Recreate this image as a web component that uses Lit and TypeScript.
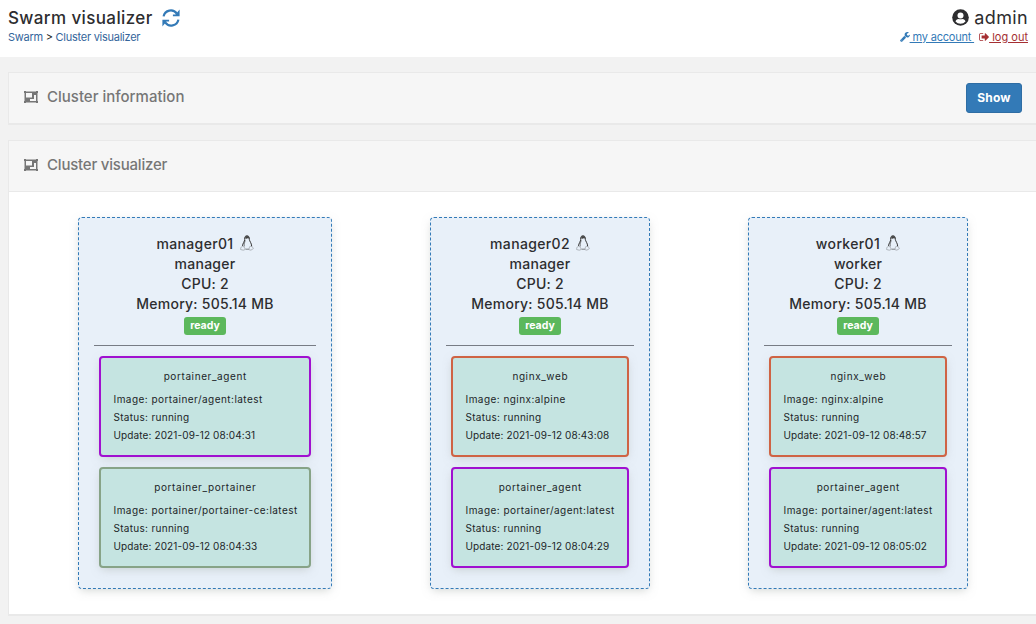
import { LitElement, html, css } from "lit";
import { customElement, property } from "lit/decorators.js";

interface Task {
  name: string;
  image: string;
  update: string;
  tone: string;
}
interface SwarmNode {
  host: string;
  role: string;
  tasks: Task[];
}

const agent = (update: string): Task => ({ name: "portainer_agent", image: "portainer/agent:latest", update, tone: "purple" });
const nginx = (update: string): Task => ({ name: "nginx_web", image: "nginx:alpine", update, tone: "orange" });

const NODES: SwarmNode[] = [
  {
    host: "manager01",
    role: "manager",
    tasks: [
      agent("2021-09-12 08:04:31"),
      { name: "portainer_portainer", image: "portainer/portainer-ce:latest", update: "2021-09-12 08:04:33", tone: "green" },
    ],
  },
  { host: "manager02", role: "manager", tasks: [nginx("2021-09-12 08:43:08"), agent("2021-09-12 08:04:29")] },
  { host: "worker01", role: "worker", tasks: [nginx("2021-09-12 08:48:57"), agent("2021-09-12 08:05:02")] },
];

const refreshIcon = html`<svg class="refresh" viewBox="0 0 18 18">
  <path d="M1.600 7.400A7.300 7.300 0 0 1 14.800 4.600M16.400 10.600A7.300 7.300 0 0 1 3.200 13.400" fill="none" stroke="currentColor" stroke-width="2.200" />
  <path d="M17.600 .5V7.200H10.900V5.600H13.500zM.4 17.500V10.800H7.100V12.400H4.500z" fill="currentColor" />
</svg>`;

const userIcon = html`<svg class="user" viewBox="0 0 17 17">
  <circle cx="8.500" cy="8.500" r="8.300" fill="#2d2d2f" />
  <circle cx="8.500" cy="6.400" r="3" fill="#fff" />
  <path d="M3.500 12.400c.4-1.600 1.500-2.500 3-2.500.7.3 1.300.4 2 .4s1.300-.1 2-.4c1.500 0 2.600.9 3 2.500a6.300 6.300 0 0 1-10 0z" fill="#fff" />
</svg>`;

const wrenchIcon = html`<svg class="mini" viewBox="64 128 1664 1664">
  <path
    fill="currentColor"
    d="M448 1472q0-26-19-45t-45-19-45 19-19 45 19 45 45 19 45-19 19-45zm644-420l-682 682q-37 37-90 37-52 0-91-37l-106-108q-38-36-38-90 0-53 38-91l681-681q39 98 114.500 173.500t173.500 114.500zm634-435q0 39-23 106-47 134-164.500 217.500t-258.500 83.500q-185 0-316.500-131.500t-131.500-316.500 131.500-316.500 316.500-131.500q58 0 121.500 16.500t107.500 46.500q16 11 16 28t-16 28l-293 169v224l193 107q5-3 79-48.500t135.500-81 70.500-35.500q15 0 23.500 10t8.500 25z"
  />
</svg>`;

const signOutIcon = html`<svg class="mini" viewBox="32 100 1600 1600">
  <path
    fill="currentColor"
    d="M704 1440q0 4 1 20t.5 26.500-3 23.500-10 19.500-20.500 6.500h-320q-119 0-203.500-84.500t-84.500-203.500v-704q0-119 84.500-203.500t203.500-84.500h320q13 0 22.500 9.500t9.500 22.500q0 4 1 20t.5 26.500-3 23.500-10 19.500-20.500 6.500h-320q-66 0-113 47t-47 113v704q0 66 47 113t113 47h312l11.500 1 11.500 3 8 5.500 7 9 2 13.500zm928-544q0 26-19 45l-544 544q-19 19-45 19t-45-19-19-45v-288h-448q-26 0-45-19t-19-45v-384q0-26 19-45t45-19h448v-288q0-26 19-45t45-19 45 19l544 544q19 19 19 45z"
  />
</svg>`;

const groupIcon = html`<svg class="group" viewBox="0 0 14 12">
  <path
    fill="currentColor"
    fill-rule="evenodd"
    d="M0 0H2V.5H12V0H14V2H13.500V10H14V12H12V11.500H2V12H0V10H.5V2H0zM2 2V6.500H8V2zM10 4V8H6V10H12V4z"
  />
</svg>`;

const tuxIcon = html`<svg class="tux" viewBox="0 0 14 16">
  <g fill="none" stroke="#333">
    <path d="M4.700 4.500C4.500 2 5.200.8 7 .8s2.500 1.400 2.300 3.500c.2 2 2.300 3.800 2.400 7" stroke-width="1" />
    <path d="M4.700 4.500C4.700 6.400 2.700 8.200 2.500 11" stroke-width="1" />
    <path d="M5.300 5.300C4.600 7.300 4 9 4.300 11.500M5.500 14.200h3.500" stroke-width=".6" />
    <path
      d="M2.300 11.200C3.500 11 4.500 12.500 5.200 14c-.3 1.600-2.500 1.200-4.600.5 0-1.200.2-2.500 1.700-3.300zM11.800 11.300c.4 1 1.300 1.300 1.600 2.200-1.400 1.200-3.400 2.500-4.300 1 .2-1.500.4-3.200 1-3.200s1 .6 1.700 0z"
      stroke="#8a8d92"
      stroke-width=".6"
    />
  </g>
  <path d="M5.200 1.600C6 .7 8.100.7 8.900 1.800l.1 1.700-1.200-.3-1.300.5-1.300-.2z" fill="#444" />
</svg>`;

@customElement("swarm-node")
export class SwarmNodeCard extends LitElement {
  @property({ attribute: false }) node!: SwarmNode;

  static styles = css`
    :host {
      display: block;
      box-sizing: border-box;
      height: 372px;
      padding: 15px;
      border: 1px dashed #337ab7;
      border-radius: 4px;
      background: #e8f0f9;
      box-shadow: 0 3px 10px -2px rgba(161, 170, 166, 0.5);
    }
    .info {
      display: flex;
      flex-direction: column;
      align-items: center;
      padding-top: 1px;
      font-size: 14px;
      font-weight: 500;
      line-height: 20px;
      letter-spacing: 0.25px;
      color: #2d2d2f;
    }
    .host {
      display: flex;
      gap: 6px;
      height: 20px;
      letter-spacing: 0.35px;
    }
    .tux {
      width: 14px;
      height: 16px;
      margin-top: 1px;
    }
    .label {
      box-sizing: border-box;
      width: 42px;
      height: 18px;
      margin-top: 3px;
      border-radius: 3px;
      background: #5cb85c;
      color: #fff;
      text-align: center;
      font-size: 10.5px;
      font-weight: 700;
      line-height: 17px;
      letter-spacing: 0;
    }
    .tasks {
      display: flex;
      flex-direction: column;
      gap: 10px;
      margin-top: 10px;
      padding: 10px 5px 0;
      border-top: 1px solid #777c85;
    }
    .task {
      box-sizing: border-box;
      height: 101px;
      padding: 9px 12px;
      border: 2px solid;
      border-radius: 4px;
      background: #c5e4e1;
      box-shadow: 0 3px 10px -2px rgba(161, 170, 166, 0.5);
      font-size: 10px;
      line-height: 18px;
      letter-spacing: 0.3px;
      white-space: nowrap;
    }
    .task div {
      padding-left: 0.5px;
      color: #1c2528;
    }
    .task .name {
      text-align: center;
      margin-bottom: 5px;
      letter-spacing: 0.6px;
    }
    .task .image {
      letter-spacing: 0.45px;
    }
    .task .update {
      letter-spacing: 0.12px;
    }
    .purple {
      border-color: #a010d0;
    }
    .green {
      border-color: #87a387;
    }
    .orange {
      border-color: #cf6344;
    }
  `;

  render() {
    const n = this.node;
    return html`
      <div class="info">
        <div class="host"><span>${n.host}</span>${tuxIcon}</div>
        <div>${n.role}</div>
        <div>CPU: 2</div>
        <div>Memory: 505.14 MB</div>
        <div class="label">ready</div>
      </div>
      <div class="tasks">
        ${n.tasks.map(
          (t) => html`<div class="task ${t.tone}">
            <div class="name">${t.name}</div>
            <div class="image">Image: ${t.image}</div>
            <div>Status: running</div>
            <div class="update">Update: ${t.update}</div>
          </div>`
        )}
      </div>
    `;
  }
}

@customElement("app-root")
export class AppRoot extends LitElement {
  static styles = css`
    :host {
      display: block;
      box-sizing: border-box;
      height: 624px;
      overflow: hidden;
      background: #f2f2f2;
      font-family: Inter, "Open Sans", sans-serif;
      color: #2d2d2f;
    }
    .header {
      display: flex;
      justify-content: space-between;
      box-sizing: border-box;
      height: 57px;
      padding: 7px 8px 0;
      background: #fff;
    }
    .title {
      display: flex;
      align-items: center;
      gap: 9px;
      height: 22px;
      font-size: 17px;
      font-weight: 500;
      letter-spacing: 0.38px;
    }
    .refresh {
      width: 18px;
      height: 18px;
      color: #337ab7;
    }
    .crumbs {
      font-size: 11px;
      line-height: 16px;
      letter-spacing: -0.26px;
      color: #222;
    }
    .crumbs a {
      color: #34659b;
    }
    .account {
      display: flex;
      flex-direction: column;
      align-items: flex-end;
    }
    .account .title {
      gap: 5px;
      font-size: 18px;
      letter-spacing: 0.35px;
      font-weight: 400;
    }
    .account .title span {
      padding-bottom: 2px;
    }
    .user {
      width: 17px;
      height: 17px;
      padding-bottom: 1px;
    }
    .links {
      display: flex;
      gap: 5px;
      font-size: 11px;
      line-height: 16px;
      color: #337ab7;
      white-space: pre;
    }
    .links span {
      display: flex;
      align-items: center;
    }
    .links a {
      text-decoration: underline;
      letter-spacing: -0.2px;
    }
    .links .out {
      color: #a52f33;
    }
    .links .out a {
      letter-spacing: 0;
    }
    .mini {
      width: 10px;
      height: 10px;
    }
    .widget {
      box-sizing: border-box;
      width: 1036px;
      margin: 15px 0 0 8px;
      border: 1px solid #e9e9e9;
      border-bottom-width: 2px;
      background: #fff;
    }
    .bar {
      display: flex;
      align-items: center;
      box-sizing: border-box;
      height: 50px;
      padding: 0 21px 0 15px;
      background: #f6f6f6;
      font-size: 15px;
      font-weight: 500;
      color: #767676;
    }
    .bar span {
      flex: 1;
      padding-bottom: 3px;
    }
    .tight {
      letter-spacing: -0.2px;
    }
    .group {
      width: 14px;
      height: 12px;
      margin: 0 9px 2px 0;
    }
    .show {
      box-sizing: border-box;
      width: 56px;
      height: 30px;
      padding: 0 0 2px;
      border: 1px solid #2e6da4;
      border-radius: 3px;
      background: #337ab7;
      color: #fff;
      font: 700 12px Inter, sans-serif;
      letter-spacing: 0.2px;
    }
    .nodes {
      display: flex;
      justify-content: space-around;
      align-items: flex-start;
      box-sizing: border-box;
      width: 1028px;
      height: 423px;
      padding: 25px 20px 0;
      border-top: 1px solid #e9e9e9;
    }
    .wide {
      width: 254px;
    }
    .narrow {
      width: 220px;
    }
  `;

  render() {
    return html`
      <div class="header">
        <div>
          <div class="title"><span>Swarm visualizer</span>${refreshIcon}</div>
          <div class="crumbs"><a>Swarm</a> &gt; <a>Cluster visualizer</a></div>
        </div>
        <div class="account">
          <div class="title">${userIcon}<span>admin</span></div>
          <div class="links">
            <span>${wrenchIcon}<a> my account </a></span><span class="out">${signOutIcon}<a> log out</a></span>
          </div>
        </div>
      </div>
      <div class="widget">
        <div class="bar">${groupIcon}<span>Cluster information</span><button class="show">Show</button></div>
      </div>
      <div class="widget">
        <div class="bar">${groupIcon}<span class="tight">Cluster visualizer</span></div>
        <div class="nodes">
          ${NODES.map((n, i) => html`<swarm-node class=${i === 0 ? "wide" : "narrow"} .node=${n}></swarm-node>`)}
        </div>
      </div>
    `;
  }
}
